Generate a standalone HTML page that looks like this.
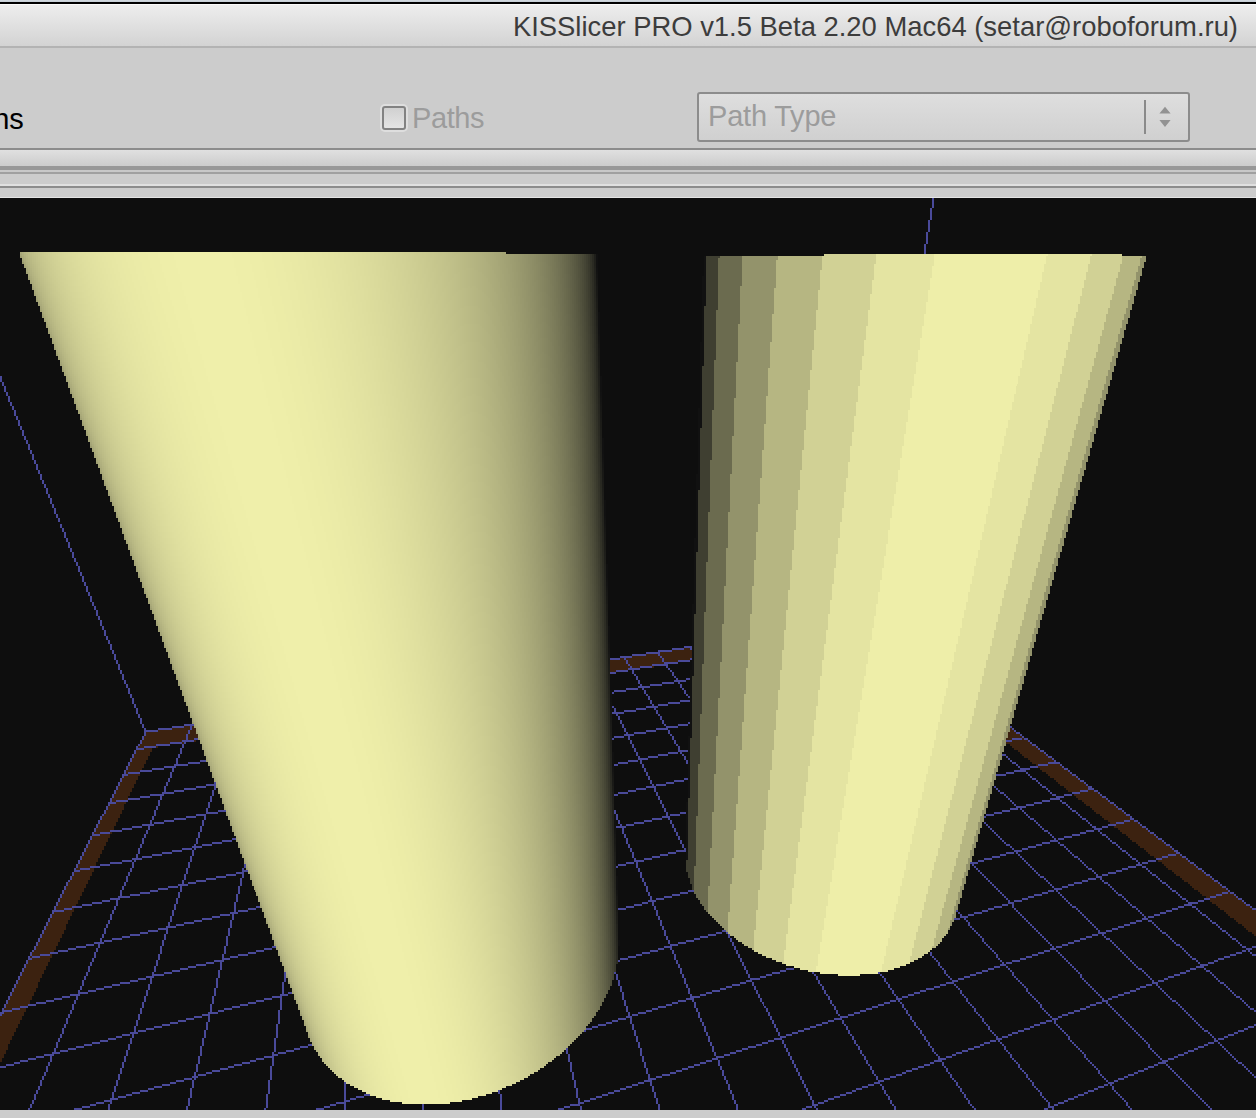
<!DOCTYPE html>
<html><head><meta charset="utf-8"><title>KISSlicer</title>
<style>
html,body{margin:0;padding:0;}
body{width:1256px;height:1118px;position:relative;overflow:hidden;background:#cccccc;font-family:"Liberation Sans",sans-serif;}
.abs{position:absolute;}
#scene{position:absolute;left:0;top:198px;width:1256px;height:912px;background:#0e0e0e;overflow:hidden;}
#scene svg{position:absolute;left:0;top:0;display:block;}
</style></head><body>
<!-- title bar -->
<div class="abs" style="left:0;top:0;width:1256px;height:2px;background:linear-gradient(#d3dae1,#c3cbd3)"></div>
<div class="abs" style="left:0;top:2px;width:1256px;height:2px;background:#000"></div>
<div class="abs" style="left:0;top:4px;width:1256px;height:42px;background:linear-gradient(#eeeeee,#d3d3d3)"></div>
<div class="abs" style="left:0;top:4px;width:1256px;height:1px;background:#fafafa"></div>
<div class="abs" style="left:0;top:46px;width:1256px;height:2px;background:#b3b3b3"></div>
<div class="abs" id="title" style="right:18px;top:11px;height:32px;line-height:32px;font-size:27.4px;color:#3c3c3c;white-space:nowrap;">KISSlicer PRO v1.5 Beta 2.20 Mac64 (setar@roboforum.ru)</div>
<!-- toolbar -->
<div class="abs" id="ns" style="left:-23px;top:101px;font-size:29px;line-height:36px;color:#000;white-space:nowrap;">ons</div>
<div class="abs" style="left:380px;top:104px;width:28px;height:28px;border-radius:5px;background:#dedede"></div>
<div class="abs" style="left:382px;top:106px;width:20px;height:20px;border:2px solid #828282;border-radius:3px;background:linear-gradient(#d0d0d0,#e4e4e4)"></div>
<div class="abs" id="paths" style="left:412px;top:100px;font-size:29px;line-height:36px;letter-spacing:-0.4px;color:#9c9c9c;white-space:nowrap;">Paths</div>
<div class="abs" style="left:697px;top:92px;width:489px;height:46px;border:2px solid #8c8c8c;border-radius:3px;background:linear-gradient(#dedede,#d0d0d0)"></div>
<div class="abs" id="ptype" style="left:708px;top:98px;font-size:29px;line-height:36px;letter-spacing:-0.2px;color:#9c9c9c;white-space:nowrap;">Path Type</div>
<div class="abs" style="left:1144px;top:100px;width:2px;height:34px;background:#8a8a8a"></div>
<svg class="abs" style="left:1156px;top:104px" width="18" height="26" viewBox="0 0 18 26"><path d="M9 2.7 L14.6 9.5 L3.4 9.5 Z M3.4 16 L14.6 16 L9 23 Z" fill="#929292"/></svg>
<!-- separators -->
<div class="abs" style="left:0;top:148px;width:1256px;height:2px;background:#8c8c8c"></div>
<div class="abs" style="left:0;top:150px;width:1256px;height:16px;background:linear-gradient(#e0e0e0,#cccccc)"></div>
<div class="abs" style="left:0;top:166px;width:1256px;height:4px;background:#989898"></div>
<div class="abs" style="left:0;top:170px;width:1256px;height:2px;background:#c8c8c8"></div>
<div class="abs" style="left:0;top:172px;width:1256px;height:2px;background:#a0a0a0"></div>
<div class="abs" style="left:0;top:184px;width:1256px;height:2px;background:#e0e0e0"></div>
<div class="abs" style="left:0;top:186px;width:1256px;height:2px;background:#8c8c8c"></div>
<div class="abs" style="left:0;top:197px;width:1256px;height:1px;background:#e4e4e4"></div>
<!-- 3D scene -->
<div id="scene">
<svg width="1256" height="912" viewBox="0 198 1256 912" shape-rendering="crispEdges">
<defs><filter id="px" filterUnits="userSpaceOnUse" x="0" y="198" width="1256" height="912" color-interpolation-filters="sRGB">
<feFlood x="0" y="198" width="1" height="1" flood-color="#000" result="dot"/>
<feComposite in="dot" in2="dot" operator="over" x="0" y="198" width="2" height="2" result="tile"/>
<feTile in="tile" result="grid"/>
<feComposite in="SourceGraphic" in2="grid" operator="in" result="s"/>
<feOffset in="s" dx="1" dy="0" result="s1"/>
<feOffset in="s" dx="0" dy="1" result="s2"/>
<feOffset in="s" dx="1" dy="1" result="s3"/>
<feMerge><feMergeNode in="s"/><feMergeNode in="s1"/><feMergeNode in="s2"/><feMergeNode in="s3"/></feMerge>
</filter></defs>
<g filter="url(#px)">
<rect x="0" y="198" width="1256" height="912" fill="#0e0e0e"/>
<polygon points="145.2,731.5 865.7,619.1 880.0,629.8 135.6,750.1" fill="#3c2210"/>
<polygon points="145.2,731.5 161.0,729.0 -2237.7,5690.9 -2587.5,6042.5" fill="#3c2210"/>
<polygon points="850.4,621.5 865.7,619.1 1980.0,1451.3 1953.4,1478.0" fill="#3c2210"/>
<path d="M144.2,731.5 L146.2,731.5 L-7668.9,15920.4 L-7670.9,15920.4Z M190.7,724.2 L192.7,724.2 L-6221.6,15919.9 L-6223.6,15919.9Z M236.0,717.2 L238.0,717.2 L-4767.4,15919.3 L-4769.4,15919.3Z M279.9,710.3 L281.9,710.3 L-3313.2,15918.8 L-3315.2,15918.8Z M322.5,703.7 L324.5,703.7 L-1859.0,15918.2 L-1861.0,15918.2Z M363.9,697.2 L365.9,697.2 L-404.8,15917.7 L-406.8,15917.7Z M404.1,690.9 L406.1,690.9 L1040.8,15712.4 L1038.8,15712.4Z M443.2,684.8 L445.2,684.8 L1764.6,10448.4 L1762.6,10448.4Z M481.2,678.9 L483.2,678.9 L2120.6,7859.6 L2118.6,7859.6Z M518.1,673.2 L520.1,673.2 L2332.4,6319.9 L2330.4,6319.9Z M554.0,667.6 L556.0,667.6 L2472.7,5299.0 L2470.7,5299.0Z M589.0,662.1 L591.0,662.1 L2572.6,4572.5 L2570.6,4572.5Z M623.0,656.8 L625.0,656.8 L2647.4,4029.1 L2645.4,4029.1Z M656.1,651.6 L658.1,651.6 L2705.4,3607.4 L2703.4,3607.4Z M688.4,646.6 L690.4,646.6 L2751.7,3270.5 L2749.7,3270.5Z M719.9,641.7 L721.9,641.7 L2789.5,2995.2 L2787.5,2995.2Z M750.6,636.9 L752.6,636.9 L2821.0,2766.1 L2819.0,2766.1Z M2846.7,2571.4 L2846.7,2573.4 L781.5,633.2 L781.5,631.2Z M2869.5,2405.5 L2869.5,2407.5 L810.7,628.7 L810.7,626.7Z M2889.3,2261.8 L2889.3,2263.8 L839.2,624.2 L839.2,622.2Z M2905.8,2141.8 L2905.8,2143.8 L865.7,620.1 L865.7,618.1Z M865.7,618.1 L865.7,620.1 L145.2,732.5 L145.2,730.5Z M878.9,628.0 L878.9,630.0 L136.4,749.7 L136.4,747.7Z M898.2,642.4 L898.2,644.4 L123.2,775.4 L123.2,773.4Z M919.2,658.0 L919.2,660.0 L108.5,803.9 L108.5,801.9Z M941.9,675.0 L941.9,677.0 L92.0,835.9 L92.0,833.9Z M966.6,693.5 L966.6,695.5 L73.5,871.8 L73.5,869.8Z M993.6,713.7 L993.6,715.7 L52.6,912.6 L52.6,910.6Z M1023.3,735.9 L1023.3,737.9 L28.6,959.1 L28.6,957.1Z M1056.1,760.3 L1056.1,762.3 L0.9,1012.9 L0.9,1010.9Z M1092.4,787.4 L1092.4,789.4 L-31.4,1075.7 L-31.4,1073.7Z M1132.8,817.7 L1132.8,819.7 L-69.6,1150.0 L-69.6,1148.0Z M1178.2,851.6 L1178.2,853.6 L-115.5,1239.1 L-115.5,1237.1Z M1229.5,889.8 L1229.5,891.8 L-171.6,1348.2 L-171.6,1346.2Z M1287.9,933.5 L1287.9,935.5 L-241.9,1484.8 L-241.9,1482.8Z M1355.0,983.5 L1355.0,985.5 L-332.3,1660.6 L-332.3,1658.6Z M1432.8,1041.7 L1432.8,1043.7 L-453.2,1895.5 L-453.2,1893.5Z M1524.3,1110.0 L1524.3,1112.0 L-622.9,2225.4 L-622.9,2223.4Z M1633.3,1191.5 L1633.3,1193.5 L-878.5,2722.2 L-878.5,2720.2Z M1765.5,1290.1 L1765.5,1292.1 L-1307.4,3555.7 L-1307.4,3553.7Z M1929.0,1412.3 L1929.0,1414.3 L-2175.9,5243.7 L-2175.9,5241.7Z M2135.4,1568.2 L2137.4,1568.2 L-4870.2,10481.1 L-4872.2,10481.1Z M2407.4,1771.4 L2409.4,1771.4 L-4671.4,15919.3 L-4673.4,15919.3Z M2779.6,2049.3 L2781.6,2049.3 L-195.6,15917.6 L-197.6,15917.6Z M3319.7,2452.7 L3321.7,2452.7 L4280.3,15915.9 L4278.3,15915.9Z M4174.5,3091.1 L4176.5,3091.1 L8756.2,15914.2 L8754.2,15914.2Z M5732.4,4254.7 L5734.4,4254.7 L13232.0,15912.5 L13230.0,15912.5Z M9466.3,7043.4 L9468.3,7043.4 L17707.9,15910.8 L17705.9,15910.8Z M-867.1,-1735.2 L-865.1,-1735.2 L146.2,731.5 L144.2,731.5Z M1294.2,-2072.3 L1296.2,-2072.3 L866.7,619.1 L864.7,619.1Z" fill="#4a4a9a"/>
<g transform="matrix(1,0,0.00112,1,-1.73,-0.3)">
<polygon points="19.9,252.0 19.9,252.0 308.6,1035.6 308.6,1035.6" fill="#98986e"/>
<polygon points="19.9,252.0 19.9,252.0 308.9,1036.4 308.6,1035.6" fill="#99996e"/>
<polygon points="19.9,252.0 20.0,252.0 309.2,1037.1 308.9,1036.4" fill="#9a9a6f"/>
<polygon points="20.0,252.0 20.0,252.0 309.4,1037.8 309.2,1037.1" fill="#9b9b70"/>
<polygon points="20.0,252.0 20.0,252.0 309.7,1038.5 309.4,1037.8" fill="#9c9c70"/>
<polygon points="20.0,252.0 20.1,252.0 310.0,1039.3 309.7,1038.5" fill="#9d9d71"/>
<polygon points="20.1,252.0 20.2,252.0 310.4,1040.0 310.0,1039.3" fill="#9e9e72"/>
<polygon points="20.2,252.0 20.3,252.0 310.7,1040.7 310.4,1040.0" fill="#9f9f73"/>
<polygon points="20.3,252.0 20.4,252.0 311.0,1041.5 310.7,1040.7" fill="#a0a073"/>
<polygon points="20.4,252.0 20.5,252.0 311.3,1042.2 311.0,1041.5" fill="#a1a174"/>
<polygon points="20.5,252.0 20.6,252.0 311.7,1043.0 311.3,1042.2" fill="#a2a275"/>
<polygon points="20.6,252.0 20.8,252.0 312.0,1043.7 311.7,1043.0" fill="#a3a375"/>
<polygon points="20.8,252.0 20.9,252.0 312.4,1044.5 312.0,1043.7" fill="#a4a476"/>
<polygon points="20.9,252.0 21.1,252.0 312.8,1045.2 312.4,1044.5" fill="#a5a577"/>
<polygon points="21.1,252.0 21.3,252.0 313.2,1046.0 312.8,1045.2" fill="#a6a677"/>
<polygon points="21.3,252.0 21.5,252.0 313.5,1046.7 313.2,1046.0" fill="#a7a778"/>
<polygon points="21.5,252.0 21.8,252.0 313.9,1047.5 313.5,1046.7" fill="#a8a879"/>
<polygon points="21.8,252.0 22.0,252.0 314.3,1048.2 313.9,1047.5" fill="#a9a979"/>
<polygon points="22.0,252.0 22.3,252.0 314.8,1049.0 314.3,1048.2" fill="#aaaa7a"/>
<polygon points="22.3,252.0 22.6,252.0 315.2,1049.7 314.8,1049.0" fill="#abab7b"/>
<polygon points="22.6,252.0 22.9,252.0 315.6,1050.5 315.2,1049.7" fill="#acac7b"/>
<polygon points="22.9,252.0 23.2,252.0 316.1,1051.2 315.6,1050.5" fill="#adad7c"/>
<polygon points="23.2,252.0 23.5,252.0 316.5,1052.0 316.1,1051.2" fill="#aeae7d"/>
<polygon points="23.5,252.0 23.9,252.0 317.0,1052.7 316.5,1052.0" fill="#afaf7e"/>
<polygon points="23.9,252.0 24.3,252.0 317.5,1053.5 317.0,1052.7" fill="#b0b07e"/>
<polygon points="24.3,252.0 24.7,252.0 318.0,1054.3 317.5,1053.5" fill="#b1b17f"/>
<polygon points="24.7,252.0 25.1,252.0 318.5,1055.0 318.0,1054.3" fill="#b2b280"/>
<polygon points="25.1,252.0 25.6,252.0 319.0,1055.8 318.5,1055.0" fill="#b3b380"/>
<polygon points="25.6,252.0 26.0,252.0 319.6,1056.6 319.0,1055.8" fill="#b4b481"/>
<polygon points="26.0,252.0 26.5,252.0 320.1,1057.3 319.6,1056.6" fill="#b5b582"/>
<polygon points="26.5,252.0 27.1,252.0 320.7,1058.1 320.1,1057.3" fill="#b6b682"/>
<polygon points="27.1,252.0 27.6,252.0 321.2,1058.9 320.7,1058.1" fill="#b7b783"/>
<polygon points="27.6,252.0 28.2,252.0 321.8,1059.6 321.2,1058.9" fill="#b8b884"/>
<polygon points="28.2,252.0 28.8,252.0 322.4,1060.4 321.8,1059.6" fill="#b9b984"/>
<polygon points="28.8,252.0 29.4,252.0 323.0,1061.2 322.4,1060.4" fill="#baba85"/>
<polygon points="29.4,252.0 30.0,252.0 323.6,1062.0 323.0,1061.2" fill="#bbbb86"/>
<polygon points="30.0,252.0 30.7,252.0 324.3,1062.8 323.6,1062.0" fill="#bcbc86"/>
<polygon points="30.7,252.0 31.4,252.0 324.9,1063.5 324.3,1062.8" fill="#bdbd87"/>
<polygon points="31.4,252.0 32.1,252.0 325.6,1064.3 324.9,1063.5" fill="#bebe88"/>
<polygon points="32.1,252.0 32.9,252.0 326.3,1065.1 325.6,1064.3" fill="#bfbf89"/>
<polygon points="32.9,252.0 33.7,252.0 327.0,1065.9 326.3,1065.1" fill="#c0c089"/>
<polygon points="33.7,252.0 34.5,252.0 327.7,1066.7 327.0,1065.9" fill="#c1c18a"/>
<polygon points="34.5,252.0 35.4,252.0 328.4,1067.5 327.7,1066.7" fill="#c2c28b"/>
<polygon points="35.4,252.0 36.3,252.0 329.2,1068.3 328.4,1067.5" fill="#c3c38b"/>
<polygon points="36.3,252.0 37.3,252.0 330.0,1069.1 329.2,1068.3" fill="#c4c48c"/>
<polygon points="37.3,252.0 38.2,252.0 330.8,1069.8 330.0,1069.1" fill="#c5c58d"/>
<polygon points="38.2,252.0 39.2,252.0 331.6,1070.6 330.8,1069.8" fill="#c6c68d"/>
<polygon points="39.2,252.0 40.3,252.0 332.4,1071.4 331.6,1070.6" fill="#c7c78e"/>
<polygon points="40.3,252.0 41.4,252.0 333.3,1072.2 332.4,1071.4" fill="#c8c88f"/>
<polygon points="41.4,252.0 42.5,252.0 334.1,1073.0 333.3,1072.2" fill="#c9c98f"/>
<polygon points="42.5,252.0 43.7,252.0 335.0,1073.8 334.1,1073.0" fill="#caca90"/>
<polygon points="43.7,252.0 44.9,252.0 336.0,1074.6 335.0,1073.8" fill="#cbcb91"/>
<polygon points="44.9,252.0 46.2,252.0 336.9,1075.4 336.0,1074.6" fill="#cccc91"/>
<polygon points="46.2,252.0 47.5,252.0 337.9,1076.2 336.9,1075.4" fill="#cdcd92"/>
<polygon points="47.5,252.0 48.9,252.0 338.9,1077.1 337.9,1076.2" fill="#cece93"/>
<polygon points="48.9,252.0 50.3,252.0 339.9,1077.9 338.9,1077.1" fill="#cfcf94"/>
<polygon points="50.3,252.0 51.8,252.0 341.0,1078.7 339.9,1077.9" fill="#d0d094"/>
<polygon points="51.8,252.0 53.4,252.0 342.1,1079.5 341.0,1078.7" fill="#d1d195"/>
<polygon points="53.4,252.0 55.0,252.0 343.2,1080.3 342.1,1079.5" fill="#d2d296"/>
<polygon points="55.0,252.0 56.7,252.0 344.3,1081.1 343.2,1080.3" fill="#d3d396"/>
<polygon points="56.7,252.0 58.4,252.0 345.5,1081.9 344.3,1081.1" fill="#d4d497"/>
<polygon points="58.4,252.0 60.3,252.0 346.7,1082.8 345.5,1081.9" fill="#d5d598"/>
<polygon points="60.3,252.0 62.1,252.0 348.0,1083.6 346.7,1082.8" fill="#d6d698"/>
<polygon points="62.1,252.0 64.1,252.0 349.3,1084.4 348.0,1083.6" fill="#d7d799"/>
<polygon points="64.1,252.0 66.2,252.0 350.6,1085.2 349.3,1084.4" fill="#d8d89a"/>
<polygon points="66.2,252.0 68.4,252.0 352.0,1086.0 350.6,1085.2" fill="#d9d99a"/>
<polygon points="68.4,252.0 70.6,252.0 353.5,1086.9 352.0,1086.0" fill="#dada9b"/>
<polygon points="70.6,252.0 73.0,252.0 354.9,1087.7 353.5,1086.9" fill="#dbdb9c"/>
<polygon points="73.0,252.0 75.5,252.0 356.5,1088.5 354.9,1087.7" fill="#dcdc9c"/>
<polygon points="75.5,252.0 78.1,252.0 358.1,1089.4 356.5,1088.5" fill="#dddd9d"/>
<polygon points="78.1,252.0 80.8,252.0 359.8,1090.2 358.1,1089.4" fill="#dede9e"/>
<polygon points="80.8,252.0 83.6,252.0 361.5,1091.0 359.8,1090.2" fill="#dfdf9f"/>
<polygon points="83.6,252.0 86.7,252.0 363.3,1091.9 361.5,1091.0" fill="#e0e09f"/>
<polygon points="86.7,252.0 89.9,252.0 365.2,1092.7 363.3,1091.9" fill="#e1e1a0"/>
<polygon points="89.9,252.0 93.3,252.0 367.2,1093.5 365.2,1092.7" fill="#e2e2a1"/>
<polygon points="93.3,252.0 96.9,252.0 369.3,1094.4 367.2,1093.5" fill="#e3e3a1"/>
<polygon points="96.9,252.0 100.7,252.0 371.6,1095.2 369.3,1094.4" fill="#e4e4a2"/>
<polygon points="100.7,252.0 104.8,252.0 373.9,1096.1 371.6,1095.2" fill="#e5e5a3"/>
<polygon points="104.8,252.0 109.2,252.0 376.4,1096.9 373.9,1096.1" fill="#e6e6a3"/>
<polygon points="109.2,252.0 114.0,252.0 379.1,1097.8 376.4,1096.9" fill="#e7e7a4"/>
<polygon points="114.0,252.0 119.3,252.0 382.0,1098.6 379.1,1097.8" fill="#e8e8a5"/>
<polygon points="119.3,252.0 125.0,252.0 385.2,1099.5 382.0,1098.6" fill="#e9e9a5"/>
<polygon points="125.0,252.0 131.5,252.0 388.7,1100.3 385.2,1099.5" fill="#eaeaa6"/>
<polygon points="131.5,252.0 138.8,252.0 392.7,1101.2 388.7,1100.3" fill="#ebeba7"/>
<polygon points="138.8,252.0 147.5,252.0 397.3,1102.0 392.7,1101.2" fill="#ececa7"/>
<polygon points="147.5,252.0 158.3,252.0 403.0,1102.9 397.3,1102.0" fill="#ededa8"/>
<polygon points="158.3,252.0 173.6,252.0 410.9,1103.7 403.0,1102.9" fill="#eeeea9"/>
<polygon points="173.6,252.0 232.3,252.0 440.4,1103.7 434.4,1104.1 428.5,1104.3 422.6,1104.3 416.7,1104.1 410.9,1103.7" fill="#efefaa"/>
<polygon points="232.3,252.0 249.4,252.0 448.8,1102.9 440.4,1103.7" fill="#eeeea9"/>
<polygon points="249.4,252.0 261.9,252.0 455.0,1102.0 448.8,1102.9" fill="#ededa8"/>
<polygon points="261.9,252.0 272.4,252.0 460.0,1101.1 455.0,1102.0" fill="#ececa7"/>
<polygon points="272.4,252.0 281.6,252.0 464.5,1100.3 460.0,1101.1" fill="#ebeba7"/>
<polygon points="281.6,252.0 289.8,252.0 468.5,1099.4 464.5,1100.3" fill="#eaeaa6"/>
<polygon points="289.8,252.0 297.3,252.0 472.1,1098.6 468.5,1099.4" fill="#e9e9a5"/>
<polygon points="297.3,252.0 304.3,252.0 475.5,1097.7 472.1,1098.6" fill="#e8e8a5"/>
<polygon points="304.3,252.0 310.9,252.0 478.6,1096.9 475.5,1097.7" fill="#e7e7a4"/>
<polygon points="310.9,252.0 317.1,252.0 481.6,1096.0 478.6,1096.9" fill="#e6e6a3"/>
<polygon points="317.1,252.0 323.0,252.0 484.4,1095.2 481.6,1096.0" fill="#e5e5a3"/>
<polygon points="323.0,252.0 328.5,252.0 487.1,1094.3 484.4,1095.2" fill="#e4e4a2"/>
<polygon points="328.5,252.0 333.9,252.0 489.6,1093.5 487.1,1094.3" fill="#e3e3a1"/>
<polygon points="333.9,252.0 339.0,252.0 492.1,1092.6 489.6,1093.5" fill="#e2e2a1"/>
<polygon points="339.0,252.0 343.9,252.0 494.4,1091.8 492.1,1092.6" fill="#e1e1a0"/>
<polygon points="343.9,252.0 348.6,252.0 496.7,1091.0 494.4,1091.8" fill="#e0e09f"/>
<polygon points="348.6,252.0 353.2,252.0 498.9,1090.1 496.7,1091.0" fill="#dfdf9f"/>
<polygon points="353.2,252.0 357.7,252.0 501.0,1089.3 498.9,1090.1" fill="#dede9e"/>
<polygon points="357.7,252.0 361.9,252.0 503.1,1088.5 501.0,1089.3" fill="#dddd9d"/>
<polygon points="361.9,252.0 366.1,252.0 505.1,1087.6 503.1,1088.5" fill="#dcdc9c"/>
<polygon points="366.1,252.0 370.2,252.0 507.0,1086.8 505.1,1087.6" fill="#dbdb9c"/>
<polygon points="370.2,252.0 374.1,252.0 508.9,1086.0 507.0,1086.8" fill="#dada9b"/>
<polygon points="374.1,252.0 377.9,252.0 510.7,1085.1 508.9,1086.0" fill="#d9d99a"/>
<polygon points="377.9,252.0 381.7,252.0 512.5,1084.3 510.7,1085.1" fill="#d8d89a"/>
<polygon points="381.7,252.0 385.3,252.0 514.2,1083.5 512.5,1084.3" fill="#d7d799"/>
<polygon points="385.3,252.0 388.9,252.0 516.0,1082.7 514.2,1083.5" fill="#d6d698"/>
<polygon points="388.9,252.0 392.3,252.0 517.6,1081.9 516.0,1082.7" fill="#d5d598"/>
<polygon points="392.3,252.0 395.7,252.0 519.2,1081.0 517.6,1081.9" fill="#d4d497"/>
<polygon points="395.7,252.0 399.0,252.0 520.8,1080.2 519.2,1081.0" fill="#d3d396"/>
<polygon points="399.0,252.0 402.2,252.0 522.4,1079.4 520.8,1080.2" fill="#d2d296"/>
<polygon points="402.2,252.0 405.4,252.0 523.9,1078.6 522.4,1079.4" fill="#d1d195"/>
<polygon points="405.4,252.0 408.5,252.0 525.4,1077.8 523.9,1078.6" fill="#d0d094"/>
<polygon points="408.5,252.0 411.6,252.0 526.8,1077.0 525.4,1077.8" fill="#cfcf94"/>
<polygon points="411.6,252.0 414.6,252.0 528.3,1076.2 526.8,1077.0" fill="#cece93"/>
<polygon points="414.6,252.0 417.5,252.0 529.7,1075.4 528.3,1076.2" fill="#cdcd92"/>
<polygon points="417.5,252.0 420.4,252.0 531.1,1074.5 529.7,1075.4" fill="#cccc91"/>
<polygon points="420.4,252.0 423.1,252.0 532.4,1073.8 531.1,1074.5" fill="#cbcb91"/>
<polygon points="423.1,252.0 425.9,252.0 533.7,1072.9 532.4,1073.8" fill="#caca90"/>
<polygon points="425.9,252.0 428.6,252.0 535.1,1072.1 533.7,1072.9" fill="#c9c98f"/>
<polygon points="428.6,252.0 431.3,252.0 536.3,1071.3 535.1,1072.1" fill="#c8c88f"/>
<polygon points="431.3,252.0 433.9,252.0 537.6,1070.5 536.3,1071.3" fill="#c7c78e"/>
<polygon points="433.9,252.0 436.5,252.0 538.8,1069.8 537.6,1070.5" fill="#c6c68d"/>
<polygon points="436.5,252.0 439.0,252.0 540.1,1069.0 538.8,1069.8" fill="#c5c58d"/>
<polygon points="439.0,252.0 441.5,252.0 541.3,1068.2 540.1,1069.0" fill="#c4c48c"/>
<polygon points="441.5,252.0 443.9,252.0 542.4,1067.4 541.3,1068.2" fill="#c3c38b"/>
<polygon points="443.9,252.0 446.3,252.0 543.6,1066.6 542.4,1067.4" fill="#c2c28b"/>
<polygon points="446.3,252.0 448.7,252.0 544.7,1065.8 543.6,1066.6" fill="#c1c18a"/>
<polygon points="448.7,252.0 451.0,252.0 545.9,1065.0 544.7,1065.8" fill="#c0c089"/>
<polygon points="451.0,252.0 453.3,252.0 547.0,1064.2 545.9,1065.0" fill="#bfbf89"/>
<polygon points="453.3,252.0 455.5,252.0 548.1,1063.4 547.0,1064.2" fill="#bebe88"/>
<polygon points="455.5,252.0 457.7,252.0 549.2,1062.7 548.1,1063.4" fill="#bdbd87"/>
<polygon points="457.7,252.0 459.9,252.0 550.2,1061.9 549.2,1062.7" fill="#bcbc86"/>
<polygon points="459.9,252.0 462.0,252.0 551.3,1061.1 550.2,1061.9" fill="#bbbb86"/>
<polygon points="462.0,252.0 464.1,252.0 552.3,1060.3 551.3,1061.1" fill="#baba85"/>
<polygon points="464.1,252.0 466.2,252.0 553.3,1059.5 552.3,1060.3" fill="#b9b984"/>
<polygon points="466.2,252.0 468.2,252.0 554.3,1058.8 553.3,1059.5" fill="#b8b884"/>
<polygon points="468.2,252.0 470.3,252.0 555.3,1058.0 554.3,1058.8" fill="#b7b783"/>
<polygon points="470.3,252.0 472.3,252.0 556.2,1057.2 555.3,1058.0" fill="#b6b682"/>
<polygon points="472.3,252.0 474.2,252.0 557.2,1056.5 556.2,1057.2" fill="#b5b582"/>
<polygon points="474.2,252.0 476.1,252.0 558.1,1055.7 557.2,1056.5" fill="#b4b481"/>
<polygon points="476.1,252.0 478.0,252.0 559.1,1054.9 558.1,1055.7" fill="#b3b380"/>
<polygon points="478.0,252.0 479.9,252.0 560.0,1054.2 559.1,1054.9" fill="#b2b280"/>
<polygon points="479.9,252.0 481.7,252.0 560.9,1053.4 560.0,1054.2" fill="#b1b17f"/>
<polygon points="481.7,252.0 483.6,252.0 561.8,1052.6 560.9,1053.4" fill="#b0b07e"/>
<polygon points="483.6,252.0 485.4,252.0 562.7,1051.9 561.8,1052.6" fill="#afaf7e"/>
<polygon points="485.4,252.0 487.1,252.0 563.5,1051.1 562.7,1051.9" fill="#aeae7d"/>
<polygon points="487.1,252.0 488.9,252.0 564.4,1050.4 563.5,1051.1" fill="#adad7c"/>
<polygon points="488.9,252.0 490.6,252.0 565.2,1049.6 564.4,1050.4" fill="#acac7b"/>
<polygon points="490.6,252.0 492.3,252.0 566.1,1048.9 565.2,1049.6" fill="#abab7b"/>
<polygon points="492.3,252.0 494.0,252.0 566.9,1048.1 566.1,1048.9" fill="#aaaa7a"/>
<polygon points="494.0,252.0 495.6,252.0 567.7,1047.4 566.9,1048.1" fill="#a9a979"/>
<polygon points="495.6,252.0 497.2,252.0 568.5,1046.6 567.7,1047.4" fill="#a8a879"/>
<polygon points="497.2,252.0 498.8,252.0 569.3,1045.8 568.5,1046.6" fill="#a7a778"/>
<polygon points="498.8,252.0 500.4,252.0 570.1,1045.1 569.3,1045.8" fill="#a6a677"/>
<polygon points="500.4,252.0 502.0,252.0 570.9,1044.4 570.1,1045.1" fill="#a5a577"/>
<polygon points="502.0,252.0 503.5,252.0 571.6,1043.6 570.9,1044.4" fill="#a4a476"/>
<polygon points="503.5,252.0 505.0,252.0 572.4,1042.9 571.6,1043.6" fill="#a3a375"/>
<polygon points="505.0,252.0 506.0,252.0 506.0,254.0 506.7,254.0 573.1,1042.1 572.4,1042.9" fill="#a2a275"/>
<polygon points="506.7,254.0 508.2,254.0 573.9,1041.4 573.1,1042.1" fill="#a1a174"/>
<polygon points="508.2,254.0 509.6,254.0 574.6,1040.6 573.9,1041.4" fill="#a0a073"/>
<polygon points="509.6,254.0 511.1,254.0 575.3,1039.9 574.6,1040.6" fill="#9f9f73"/>
<polygon points="511.1,254.0 512.5,254.0 576.0,1039.2 575.3,1039.9" fill="#9e9e72"/>
<polygon points="512.5,254.0 513.9,254.0 576.7,1038.4 576.0,1039.2" fill="#9d9d71"/>
<polygon points="513.9,254.0 515.3,254.0 577.4,1037.7 576.7,1038.4" fill="#9c9c70"/>
<polygon points="515.3,254.0 516.6,254.0 578.1,1037.0 577.4,1037.7" fill="#9b9b70"/>
<polygon points="516.6,254.0 518.0,254.0 578.7,1036.2 578.1,1037.0" fill="#9a9a6f"/>
<polygon points="518.0,254.0 519.3,254.0 579.4,1035.5 578.7,1036.2" fill="#99996e"/>
<polygon points="519.3,254.0 520.6,254.0 580.1,1034.8 579.4,1035.5" fill="#98986e"/>
<polygon points="520.6,254.0 521.9,254.0 580.7,1034.0 580.1,1034.8" fill="#97976d"/>
<polygon points="521.9,254.0 523.2,254.0 581.4,1033.3 580.7,1034.0" fill="#96966c"/>
<polygon points="523.2,254.0 524.4,254.0 582.0,1032.6 581.4,1033.3" fill="#95956c"/>
<polygon points="524.4,254.0 525.7,254.0 582.6,1031.9 582.0,1032.6" fill="#94946b"/>
<polygon points="525.7,254.0 526.9,254.0 583.2,1031.1 582.6,1031.9" fill="#93936a"/>
<polygon points="526.9,254.0 528.1,254.0 583.8,1030.4 583.2,1031.1" fill="#92926a"/>
<polygon points="528.1,254.0 529.3,254.0 584.4,1029.7 583.8,1030.4" fill="#919169"/>
<polygon points="529.3,254.0 530.5,254.0 585.0,1029.0 584.4,1029.7" fill="#909068"/>
<polygon points="530.5,254.0 531.7,254.0 585.6,1028.3 585.0,1029.0" fill="#8f8f68"/>
<polygon points="531.7,254.0 532.8,254.0 586.2,1027.6 585.6,1028.3" fill="#8e8e67"/>
<polygon points="532.8,254.0 534.0,254.0 586.8,1026.9 586.2,1027.6" fill="#8d8d66"/>
<polygon points="534.0,254.0 535.1,254.0 587.3,1026.1 586.8,1026.9" fill="#8c8c65"/>
<polygon points="535.1,254.0 536.2,254.0 587.9,1025.4 587.3,1026.1" fill="#8b8b65"/>
<polygon points="536.2,254.0 537.3,254.0 588.5,1024.7 587.9,1025.4" fill="#8a8a64"/>
<polygon points="537.3,254.0 538.3,254.0 589.0,1024.0 588.5,1024.7" fill="#898963"/>
<polygon points="538.3,254.0 539.4,254.0 589.5,1023.3 589.0,1024.0" fill="#888863"/>
<polygon points="539.4,254.0 540.5,254.0 590.1,1022.6 589.5,1023.3" fill="#878762"/>
<polygon points="540.5,254.0 541.5,254.0 590.6,1021.9 590.1,1022.6" fill="#868661"/>
<polygon points="541.5,254.0 542.5,254.0 591.1,1021.2 590.6,1021.9" fill="#858561"/>
<polygon points="542.5,254.0 543.5,254.0 591.6,1020.5 591.1,1021.2" fill="#848460"/>
<polygon points="543.5,254.0 544.5,254.0 592.1,1019.8 591.6,1020.5" fill="#83835f"/>
<polygon points="544.5,254.0 545.5,254.0 592.6,1019.1 592.1,1019.8" fill="#82825f"/>
<polygon points="545.5,254.0 546.5,254.0 593.1,1018.4 592.6,1019.1" fill="#81815e"/>
<polygon points="546.5,254.0 547.4,254.0 593.6,1017.7 593.1,1018.4" fill="#80805d"/>
<polygon points="547.4,254.0 548.4,254.0 594.1,1017.0 593.6,1017.7" fill="#7f7f5d"/>
<polygon points="548.4,254.0 549.3,254.0 594.6,1016.3 594.1,1017.0" fill="#7e7e5c"/>
<polygon points="549.3,254.0 550.2,254.0 595.0,1015.6 594.6,1016.3" fill="#7d7d5b"/>
<polygon points="550.2,254.0 551.2,254.0 595.5,1014.9 595.0,1015.6" fill="#7c7c5a"/>
<polygon points="551.2,254.0 552.1,254.0 596.0,1014.2 595.5,1014.9" fill="#7b7b5a"/>
<polygon points="552.1,254.0 552.9,254.0 596.4,1013.6 596.0,1014.2" fill="#7a7a59"/>
<polygon points="552.9,254.0 553.8,254.0 596.9,1012.9 596.4,1013.6" fill="#797958"/>
<polygon points="553.8,254.0 554.7,254.0 597.3,1012.2 596.9,1012.9" fill="#787858"/>
<polygon points="554.7,254.0 555.5,254.0 597.7,1011.5 597.3,1012.2" fill="#777757"/>
<polygon points="555.5,254.0 556.4,254.0 598.2,1010.8 597.7,1011.5" fill="#767656"/>
<polygon points="556.4,254.0 557.2,254.0 598.6,1010.1 598.2,1010.8" fill="#757556"/>
<polygon points="557.2,254.0 558.0,254.0 599.0,1009.5 598.6,1010.1" fill="#747455"/>
<polygon points="558.0,254.0 558.8,254.0 599.4,1008.8 599.0,1009.5" fill="#737354"/>
<polygon points="558.8,254.0 559.6,254.0 599.8,1008.1 599.4,1008.8" fill="#727254"/>
<polygon points="559.6,254.0 560.4,254.0 600.2,1007.4 599.8,1008.1" fill="#717153"/>
<polygon points="560.4,254.0 561.2,254.0 600.6,1006.7 600.2,1007.4" fill="#707052"/>
<polygon points="561.2,254.0 561.9,254.0 601.0,1006.1 600.6,1006.7" fill="#6f6f52"/>
<polygon points="561.9,254.0 562.7,254.0 601.4,1005.4 601.0,1006.1" fill="#6e6e51"/>
<polygon points="562.7,254.0 563.4,254.0 601.8,1004.7 601.4,1005.4" fill="#6d6d50"/>
<polygon points="563.4,254.0 564.2,254.0 602.2,1004.0 601.8,1004.7" fill="#6c6c4f"/>
<polygon points="564.2,254.0 564.9,254.0 602.6,1003.4 602.2,1004.0" fill="#6b6b4f"/>
<polygon points="564.9,254.0 565.6,254.0 602.9,1002.7 602.6,1003.4" fill="#6a6a4e"/>
<polygon points="565.6,254.0 566.3,254.0 603.3,1002.0 602.9,1002.7" fill="#69694d"/>
<polygon points="566.3,254.0 567.0,254.0 603.6,1001.4 603.3,1002.0" fill="#68684d"/>
<polygon points="567.0,254.0 567.7,254.0 604.0,1000.7 603.6,1001.4" fill="#67674c"/>
<polygon points="567.7,254.0 568.3,254.0 604.3,1000.0 604.0,1000.7" fill="#66664b"/>
<polygon points="568.3,254.0 569.0,254.0 604.7,999.4 604.3,1000.0" fill="#65654b"/>
<polygon points="569.0,254.0 569.7,254.0 605.0,998.7 604.7,999.4" fill="#64644a"/>
<polygon points="569.7,254.0 570.3,254.0 605.4,998.1 605.0,998.7" fill="#636349"/>
<polygon points="570.3,254.0 570.9,254.0 605.7,997.4 605.4,998.1" fill="#626249"/>
<polygon points="570.9,254.0 571.6,254.0 606.0,996.7 605.7,997.4" fill="#616148"/>
<polygon points="571.6,254.0 572.2,254.0 606.3,996.1 606.0,996.7" fill="#606047"/>
<polygon points="572.2,254.0 572.8,254.0 606.6,995.4 606.3,996.1" fill="#5f5f47"/>
<polygon points="572.8,254.0 573.4,254.0 607.0,994.8 606.6,995.4" fill="#5e5e46"/>
<polygon points="573.4,254.0 574.0,254.0 607.3,994.1 607.0,994.8" fill="#5d5d45"/>
<polygon points="574.0,254.0 574.6,254.0 607.6,993.5 607.3,994.1" fill="#5c5c44"/>
<polygon points="574.6,254.0 575.1,254.0 607.9,992.8 607.6,993.5" fill="#5b5b44"/>
<polygon points="575.1,254.0 575.7,254.0 608.1,992.2 607.9,992.8" fill="#5a5a43"/>
<polygon points="575.7,254.0 576.3,254.0 608.4,991.5 608.1,992.2" fill="#595942"/>
<polygon points="576.3,254.0 576.8,254.0 608.7,990.9 608.4,991.5" fill="#585842"/>
<polygon points="576.8,254.0 577.4,254.0 609.0,990.2 608.7,990.9" fill="#575741"/>
<polygon points="577.4,254.0 577.9,254.0 609.3,989.6 609.0,990.2" fill="#565640"/>
<polygon points="577.9,254.0 578.4,254.0 609.5,988.9 609.3,989.6" fill="#555540"/>
<polygon points="578.4,254.0 578.9,254.0 609.8,988.3 609.5,988.9" fill="#54543f"/>
<polygon points="578.9,254.0 579.4,254.0 610.1,987.7 609.8,988.3" fill="#53533e"/>
<polygon points="579.4,254.0 579.9,254.0 610.3,987.0 610.1,987.7" fill="#52523e"/>
<polygon points="579.9,254.0 580.4,254.0 610.6,986.4 610.3,987.0" fill="#51513d"/>
<polygon points="580.4,254.0 580.9,254.0 610.8,985.7 610.6,986.4" fill="#50503c"/>
<polygon points="580.9,254.0 581.4,254.0 611.1,985.1 610.8,985.7" fill="#4f4f3c"/>
<polygon points="581.4,254.0 581.8,254.0 611.3,984.5 611.1,985.1" fill="#4e4e3b"/>
<polygon points="581.8,254.0 582.3,254.0 611.6,983.8 611.3,984.5" fill="#4d4d3a"/>
<polygon points="582.3,254.0 582.8,254.0 611.8,983.2 611.6,983.8" fill="#4c4c39"/>
<polygon points="582.8,254.0 583.2,254.0 612.0,982.6 611.8,983.2" fill="#4b4b39"/>
<polygon points="583.2,254.0 583.6,254.0 612.3,981.9 612.0,982.6" fill="#4a4a38"/>
<polygon points="583.6,254.0 584.1,254.0 612.5,981.3 612.3,981.9" fill="#494937"/>
<polygon points="584.1,254.0 584.5,254.0 612.7,980.7 612.5,981.3" fill="#484837"/>
<polygon points="584.5,254.0 584.9,254.0 612.9,980.0 612.7,980.7" fill="#474736"/>
<polygon points="584.9,254.0 585.3,254.0 613.1,979.4 612.9,980.0" fill="#464635"/>
<polygon points="585.3,254.0 585.7,254.0 613.3,978.8 613.1,979.4" fill="#454535"/>
<polygon points="585.7,254.0 586.1,254.0 613.5,978.2 613.3,978.8" fill="#444434"/>
<polygon points="586.1,254.0 586.5,254.0 613.7,977.5 613.5,978.2" fill="#434333"/>
<polygon points="586.5,254.0 586.9,254.0 613.9,976.9 613.7,977.5" fill="#424233"/>
<polygon points="586.9,254.0 587.2,254.0 614.1,976.3 613.9,976.9" fill="#414132"/>
<polygon points="587.2,254.0 587.6,254.0 614.3,975.7 614.1,976.3" fill="#404031"/>
<polygon points="587.6,254.0 587.9,254.0 614.5,975.1 614.3,975.7" fill="#3f3f31"/>
<polygon points="587.9,254.0 588.3,254.0 614.7,974.4 614.5,975.1" fill="#3e3e30"/>
<polygon points="588.3,254.0 588.6,254.0 614.8,973.8 614.7,974.4" fill="#3d3d2f"/>
<polygon points="588.6,254.0 589.0,254.0 615.0,973.2 614.8,973.8" fill="#3c3c2e"/>
<polygon points="589.0,254.0 589.3,254.0 615.2,972.6 615.0,973.2" fill="#3b3b2e"/>
<polygon points="589.3,254.0 589.6,254.0 615.3,972.0 615.2,972.6" fill="#3a3a2d"/>
<polygon points="589.6,254.0 589.9,254.0 615.5,971.4 615.3,972.0" fill="#39392c"/>
<polygon points="589.9,254.0 590.3,254.0 615.7,970.7 615.5,971.4" fill="#38382c"/>
<polygon points="590.3,254.0 590.6,254.0 615.8,970.1 615.7,970.7" fill="#37372b"/>
<polygon points="590.6,254.0 590.9,254.0 616.0,969.5 615.8,970.1" fill="#36362a"/>
<polygon points="590.9,254.0 591.1,254.0 616.1,968.9 616.0,969.5" fill="#35352a"/>
<polygon points="591.1,254.0 591.4,254.0 616.3,968.3 616.1,968.9" fill="#343429"/>
<polygon points="591.4,254.0 591.7,254.0 616.4,967.7 616.3,968.3" fill="#333328"/>
<polygon points="591.7,254.0 592.0,254.0 616.5,967.1 616.4,967.7" fill="#323228"/>
<polygon points="592.0,254.0 592.2,254.0 616.7,966.5 616.5,967.1" fill="#313127"/>
<polygon points="592.2,254.0 592.5,254.0 616.8,965.9 616.7,966.5" fill="#303026"/>
<polygon points="592.5,254.0 592.7,254.0 616.9,965.3 616.8,965.9" fill="#2f2f26"/>
<polygon points="592.7,254.0 593.0,254.0 617.0,964.7 616.9,965.3" fill="#2e2e25"/>
<polygon points="593.0,254.0 593.2,254.0 617.2,964.1 617.0,964.7" fill="#2d2d24"/>
<polygon points="593.2,254.0 593.5,254.0 617.3,963.5 617.2,964.1" fill="#2c2c23"/>
<polygon points="593.5,254.0 593.7,254.0 617.4,962.9 617.3,963.5" fill="#2b2b23"/>
<polygon points="593.7,254.0 593.9,254.0 617.5,962.3 617.4,962.9" fill="#2a2a22"/>
<polygon points="593.9,254.0 594.1,254.0 617.6,961.7 617.5,962.3" fill="#292921"/>
<polygon points="594.1,254.0 594.3,254.0 617.7,961.1 617.6,961.7" fill="#282821"/>
<polygon points="594.3,254.0 594.5,254.0 617.8,960.5 617.7,961.1" fill="#272720"/>
<polygon points="594.5,254.0 594.7,254.0 617.9,959.9 617.8,960.5" fill="#26261f"/>
<polygon points="594.7,254.0 594.9,254.0 618.0,959.3 617.9,959.9" fill="#25251f"/>
<polygon points="594.9,254.0 595.1,254.0 618.1,958.7 618.0,959.3" fill="#24241e"/>
<polygon points="595.1,254.0 595.3,254.0 618.2,958.1 618.1,958.7" fill="#23231d"/>
<polygon points="595.3,254.0 595.5,254.0 618.3,957.5 618.2,958.1" fill="#22221d"/>
<polygon points="595.5,254.0 595.6,254.0 618.3,956.9 618.3,957.5" fill="#21211c"/>
<polygon points="595.6,254.0 595.8,254.0 618.4,956.4 618.3,956.9" fill="#20201b"/>
<polygon points="595.8,254.0 595.9,254.0 618.5,955.8 618.4,956.4" fill="#1f1f1b"/>
<polygon points="595.9,254.0 596.1,254.0 618.6,955.2 618.5,955.8" fill="#1e1e1a"/>
<polygon points="596.1,254.0 596.2,254.0 618.6,954.6 618.6,955.2" fill="#1d1d19"/>
<polygon points="596.2,254.0 596.4,254.0 618.7,954.0 618.6,954.6" fill="#1c1c18"/>
<polygon points="596.4,254.0 596.5,254.0 618.7,953.4 618.7,954.0" fill="#1b1b18"/>
<polygon points="596.5,254.0 596.6,254.0 618.8,952.9 618.7,953.4" fill="#1a1a17"/>
<polygon points="596.6,254.0 596.8,254.0 618.9,952.3 618.8,952.9" fill="#191916"/>
<polygon points="596.8,254.0 596.9,254.0 618.9,951.7 618.9,952.3" fill="#181816"/>
<polygon points="596.9,254.0 597.0,254.0 619.0,951.1 618.9,951.7" fill="#171715"/>
<polygon points="597.0,254.0 597.1,254.0 619.0,950.5 619.0,951.1" fill="#161614"/>
<polygon points="597.1,254.0 597.2,254.0 619.0,950.0 619.0,950.5" fill="#151514"/>
<polygon points="597.2,254.0 597.3,254.0 619.1,949.4 619.0,950.0" fill="#141413"/>
<polygon points="597.3,254.0 597.4,254.0 619.1,948.8 619.1,949.4" fill="#131312"/>
<polygon points="597.4,254.0 597.5,254.0 619.1,948.2 619.1,948.8" fill="#121212"/>
<polygon points="597.5,254.0 598.1,254.0 619.2,939.5 619.3,943.8 619.1,948.2" fill="#111111"/>
</g>
<polygon points="703.1,256.0 706.1,256.0 686.2,869.8 685.7,866.5 685.2,863.2 685.0,859.9 684.8,856.7 684.9,853.6" fill="#111111"/>
<polygon points="706.1,256.0 718.6,256.0 693.5,891.0 691.8,887.4 690.4,883.9 689.1,880.3 688.0,876.8 687.0,873.3 686.2,869.8" fill="#3f3f31"/>
<polygon points="718.6,256.0 742.1,256.0 707.1,912.1 704.4,908.6 701.8,905.1 699.5,901.6 697.3,898.1 695.3,894.5 693.5,891.0" fill="#6b6b4f"/>
<polygon points="742.1,256.0 776.8,256.0 727.0,932.1 723.2,928.9 719.7,925.6 716.3,922.3 713.0,919.0 710.0,915.6 707.1,912.1" fill="#93936b"/>
<polygon points="776.8,256.0 821.9,256.0 752.5,949.5 747.9,946.9 743.4,944.1 739.1,941.2 734.9,938.2 730.8,935.2 727.0,932.1" fill="#b6b682"/>
<polygon points="821.9,256.0 824.0,256.0 824.0,254.0 875.8,254.0 782.6,963.2 777.3,961.2 772.1,959.1 767.1,956.9 762.1,954.6 757.2,952.1 752.5,949.5" fill="#d1d195"/>
<polygon points="875.8,254.0 934.3,254.0 815.4,971.9 809.8,970.8 804.3,969.6 798.8,968.2 793.3,966.7 787.9,965.0 782.6,963.2" fill="#e4e4a2"/>
<polygon points="934.3,254.0 993.0,254.0 848.8,974.9 843.3,974.8 837.7,974.5 832.2,974.1 826.6,973.5 821.0,972.8 815.4,971.9" fill="#eeeea9"/>
<polygon points="993.0,254.0 1046.7,254.0 880.6,971.9 875.5,972.8 870.3,973.5 865.1,974.1 859.7,974.5 854.3,974.8 848.8,974.9" fill="#eeeea9"/>
<polygon points="1046.7,254.0 1091.1,254.0 908.6,963.1 904.3,965.0 899.8,966.6 895.2,968.2 890.5,969.6 885.6,970.8 880.6,971.9" fill="#e4e4a2"/>
<polygon points="1091.1,254.0 1122.0,254.0 1122.0,256.0 1122.6,256.0 931.2,949.5 927.8,952.1 924.3,954.5 920.7,956.9 916.8,959.1 912.8,961.2 908.6,963.1" fill="#d1d195"/>
<polygon points="1122.6,256.0 1141.0,256.0 947.1,932.0 944.9,935.1 942.6,938.2 940.0,941.1 937.2,944.0 934.3,946.8 931.2,949.5" fill="#b6b682"/>
<polygon points="1141.0,256.0 1146.1,256.0 955.5,913.9 954.5,917.0 953.3,920.1 952.0,923.2 950.5,926.2 948.9,929.1 947.1,932.0" fill="#93936b"/>
</g>
</svg>
</div>
<div class="abs" style="left:0;top:1110px;width:1256px;height:8px;background:#cccccc"></div>
</body></html>
